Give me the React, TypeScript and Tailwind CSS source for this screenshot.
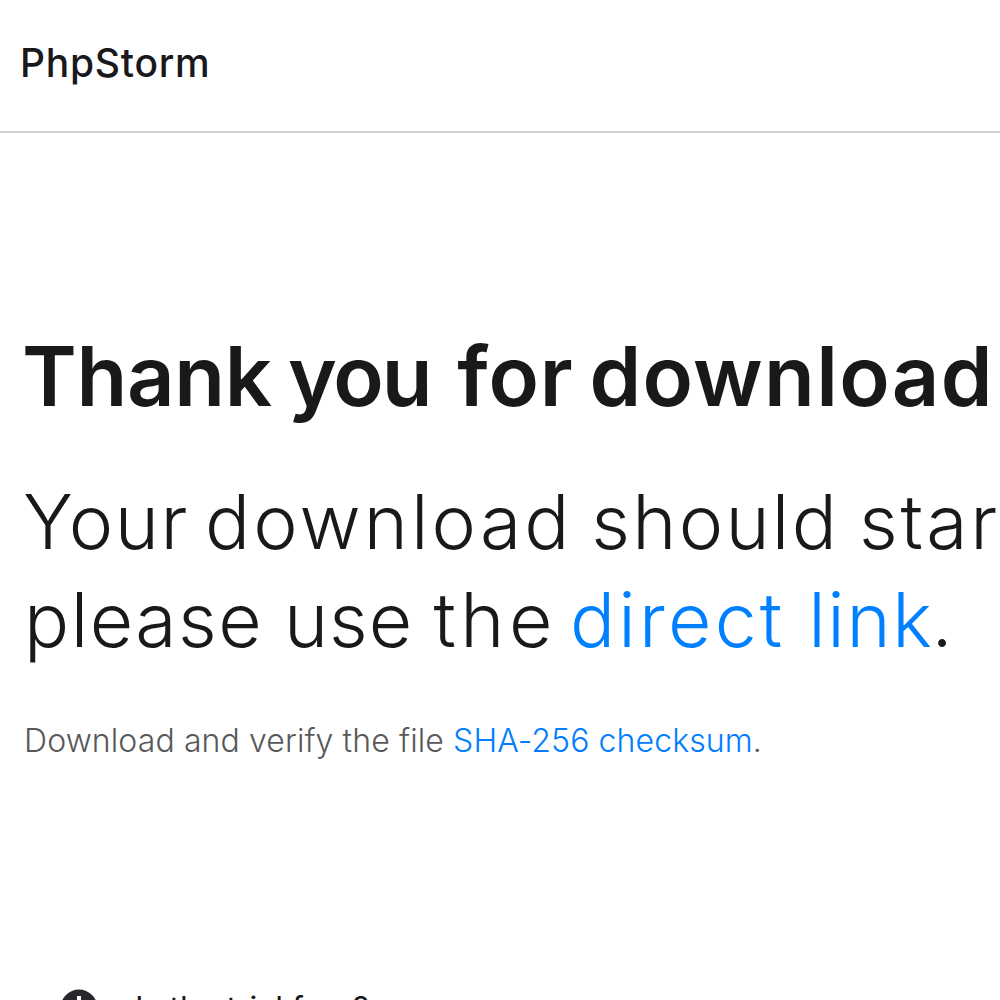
export default function App() {
  return (
    <div className="h-[1000px] w-[1000px] overflow-hidden bg-white font-['Inter',sans-serif] text-[#19191c]">
      <header className="flex h-[133px] items-center border-b-2 border-[#d1d1d2] pb-[6px] pl-[20px]">
        <span className="whitespace-nowrap text-[39px] leading-[48px] font-medium tracking-[0.75px]">PhpStorm</span>
      </header>
      <main className="pl-[24px] pt-[191px] whitespace-nowrap">
        <h1 className="-ml-[2px] text-[83px] leading-[104px] font-semibold">
          <span className="mr-[-4.7px] tracking-[-0.3px]">Thank</span>{' '}
          <span className="mr-[6px] tracking-[-2.1px]">you</span>{' '}
          <span className="mr-[-5px] tracking-[0.8px]">for</span>{' '}
          <span className="mr-[4px] tracking-[1.3px]">download</span>
          <span className="tracking-[1.3px]">ing PhpStorm!</span>
        </h1>
        <p className="mt-[45px] text-[75px] leading-[98px] font-light">
          <span className="-ml-px mr-[-5.2px] tracking-[1.6px]">Your</span>{' '}
          <span className="mr-[-2.4px] tracking-[3.1px]">download</span>{' '}
          <span className="mr-[-1.2px] tracking-[2.3px]">should</span>{' '}
          <span className="tracking-[2.8px]">start shortly. If it doesn’t,</span>
          <br />
          <span className="mr-[-0.4px] tracking-[1.5px]">please</span>{' '}
          <span className="mr-[-1px] tracking-[1px]">use</span>{' '}
          <span className="mr-[-8px] tracking-[4.5px]">the</span>{' '}
          <a className="text-[#0080ff]">
            <span className="mr-[1.8px] tracking-[3.2px]">direct</span>{' '}
            <span className="tracking-[1.6px]">link</span>
          </a>
          <span className="-ml-[2px]">.</span>
        </p>
        <p className="mt-[48px] text-[32px] leading-[48px] font-light tracking-[0.11px] text-[#58585a]">
          Download and verify the file <a className="text-[#007eff]">SHA-256 checksum</a>.
        </p>
        <div className="mt-[223px] flex items-start pl-[36px]">
          <svg className="mt-px" width="38" height="38" viewBox="0 0 38 38">
            <circle cx="19" cy="19" r="18.5" fill="#27282c" />
            <path d="M19 7v24M7 19h24" stroke="white" strokeWidth="4" />
          </svg>
          <span className="-mt-[3px] ml-[37px] text-[32px] leading-[48px]">Is the trial free?</span>
        </div>
      </main>
    </div>
  );
}
